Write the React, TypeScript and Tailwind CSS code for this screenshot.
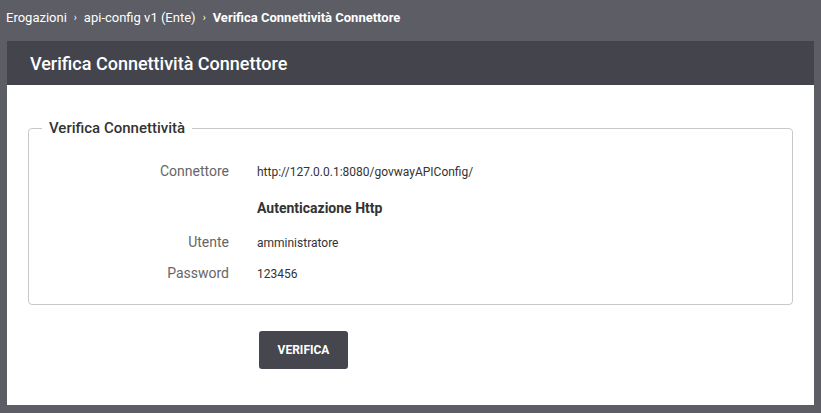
export default function App() {
  return (
    <div className="w-[821px] h-[413px] bg-[#5c5d65] font-[Roboto,sans-serif] overflow-hidden">
      <div className="h-[35px] flex items-center pl-[6px] text-[13px] text-white gap-[7px]">
        <span>Erogazioni</span>
        <span className="text-[10px]">›</span>
        <span>api-config v1 (Ente)</span>
        <span className="text-[10px]">›</span>
        <span className="font-bold">Verifica Connettività Connettore</span>
      </div>
      <div className="mx-[7px] mt-[6px] h-[364px] bg-white">
        <div className="h-[44px] bg-[#43444c] flex items-center pl-[23px] text-white text-[18px] font-medium">
          Verifica Connettività Connettore
        </div>
        <div className="pt-[32px] px-[21px]">
          <fieldset className="border border-[#c8c8c8] rounded-[4px] h-[188px] px-[13px] pb-0">
            <legend className="px-[7px] text-[15px] font-medium text-[#333]">Verifica Connettività</legend>
            <div className="text-[13px] text-[#333] mt-[18px] px-[6px]">
              <div className="flex items-center h-[28px]">
                <div className="w-[181px] text-right text-[14px] text-[#666]">Connettore</div>
                <div className="ml-[28px] text-[12px]">http://127.0.0.1:8080/govwayAPIConfig/</div>
              </div>
              <div className="flex items-center h-[46px]">
                <div className="ml-[209px] text-[14px] font-bold text-[#333]">Autenticazione Http</div>
              </div>
              <div className="flex items-center h-[22px]">
                <div className="w-[181px] text-right text-[14px] text-[#666]">Utente</div>
                <div className="ml-[28px] text-[12px]">amministratore</div>
              </div>
              <div className="flex items-center h-[40px]">
                <div className="w-[181px] text-right text-[14px] text-[#666]">Password</div>
                <div className="ml-[28px] text-[12px]">123456</div>
              </div>
            </div>
          </fieldset>
          <div className="mt-[26px] ml-[231px]">
            <button className="w-[89px] h-[38px] bg-[#45464e] rounded-[3px] text-white text-[12px] font-bold">VERIFICA</button>
          </div>
        </div>
      </div>
    </div>
  );
}
